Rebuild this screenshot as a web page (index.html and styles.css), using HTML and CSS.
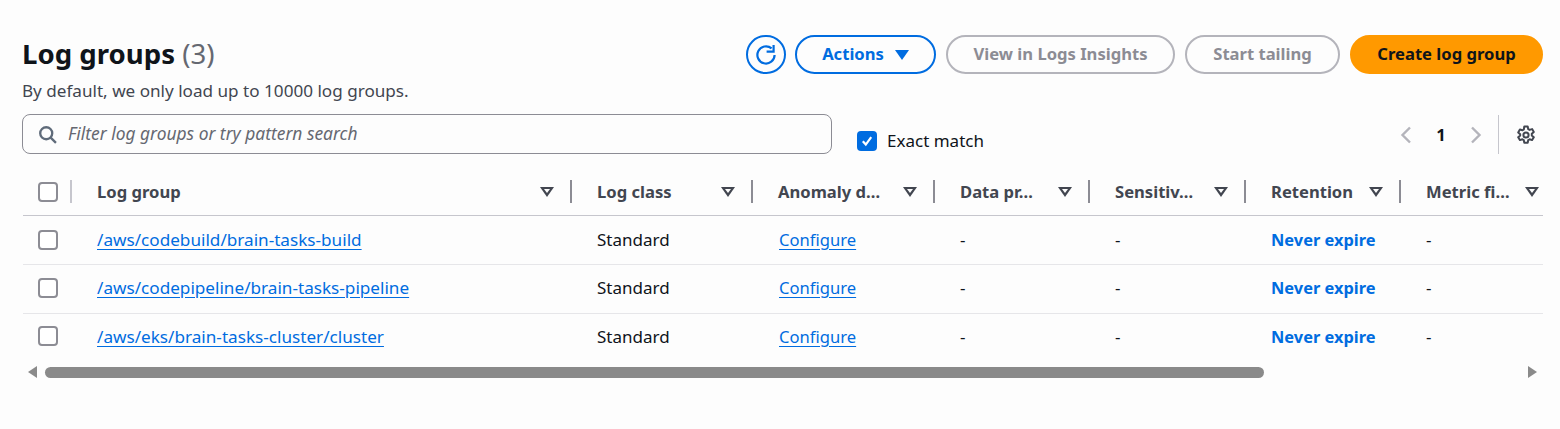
FILE: index.html
```html
<!DOCTYPE html>
<html lang="en">
<head>
  <meta charset="UTF-8">
  <meta name="viewport" content="width=device-width, initial-scale=1">
  <title>Log groups</title>
  <link rel="stylesheet" href="styles.css">
</head>
<body>

  <div class="container">

    <div class="header">
      <div class="heading">
        <h1>Log groups <span class="count">(3)</span></h1>
        <p>By default, we only load up to 10000 log groups.</p>
      </div>
      <div class="actions">
        <button class="btn-icon" type="button" aria-label="Refresh">
          <svg width="24" height="24" viewBox="0 0 24 24" fill="none" stroke="currentColor" stroke-width="2.2"><path d="M20.6 12a8.6 8.6 0 1 1-3-6.6"/><path d="M12.6 8.6h7V2"/></svg>
        </button>
        <button class="btn btn-normal" type="button">Actions <span class="caret"></span></button>
        <button class="btn btn-disabled btn-insights" type="button">View in Logs Insights</button>
        <button class="btn btn-disabled btn-tail" type="button">Start tailing</button>
        <button class="btn btn-primary" type="button">Create log group</button>
      </div>
    </div>

    <div class="filters">
      <div class="search">
        <svg width="19" height="19" viewBox="0 0 18 18" fill="none" stroke="#5f6b7a" stroke-width="2.2"><circle cx="7.8" cy="7.8" r="5.7"/><path d="M12 12l5 5"/></svg>
        <span>Filter log groups or try pattern search</span>
      </div>
      <label class="exact">
        <span class="check-on">
          <svg width="14" height="14" viewBox="0 0 14 14" fill="none" stroke="#fff" stroke-width="2.2"><path d="M2.8 7.2l3 3.4 5.4-7.4"/></svg>
        </span>
        <span class="exact-text">Exact match</span>
      </label>
      <div class="pager">
        <svg class="chev" width="14" height="20" viewBox="0 0 14 20" fill="none" stroke="#b4b4bb" stroke-width="2.4"><path d="M11 2.5L3.5 10l7.5 7.5"/></svg>
        <span class="page">1</span>
        <svg class="chev" width="14" height="20" viewBox="0 0 14 20" fill="none" stroke="#b4b4bb" stroke-width="2.4"><path d="M3 2.5l7.5 7.5L3 17.500"/></svg>
        <span class="pager-sep"></span>
        <svg class="gear" width="20" height="20" viewBox="0 0 20 20" fill="none" stroke="#424650" stroke-width="2"><circle cx="10" cy="10" r="2.6"/><path d="M8.3 1.500h3.400l.5 2.600 1.400.8 2.500-.8 1.700 2.900-2 1.800v1.600l2 1.800-1.700 2.900-2.500-.8-1.400.8-.5 2.600H8.300l-.5-2.600-1.400-.8-2.500.8-1.700-2.900 2-1.800V9.200l-2-1.800 1.700-2.900 2.500.8 1.400-.8z" stroke-linejoin="round"/></svg>
      </div>
    </div>

    <table class="groups">
      <colgroup>
        <col class="c-check"><col class="c-group"><col class="c-class"><col class="c-anomaly">
        <col class="c-data"><col class="c-sens"><col class="c-ret"><col class="c-metric">
      </colgroup>
      <thead>
        <tr>
          <th class="cell-check"><span class="box"></span><i class="sep sep-light"></i></th>
          <th><div class="th"><span class="th-text">Log group</span><span class="sort"></span></div><i class="sep"></i></th>
          <th><div class="th"><span class="th-text">Log class</span><span class="sort"></span></div><i class="sep"></i></th>
          <th><div class="th"><span class="th-text">Anomaly d…</span><span class="sort"></span></div><i class="sep"></i></th>
          <th><div class="th"><span class="th-text">Data pr…</span><span class="sort"></span></div><i class="sep"></i></th>
          <th><div class="th"><span class="th-text">Sensitiv…</span><span class="sort"></span></div><i class="sep"></i></th>
          <th><div class="th"><span class="th-text">Retention</span><span class="sort"></span></div><i class="sep"></i></th>
          <th><div class="th th-last"><span class="th-text">Metric fi…</span><span class="sort"></span></div></th>
        </tr>
      </thead>
      <tbody>
        <tr>
          <td class="cell-check"><span class="box"></span></td>
          <td><a class="path" href="#">/aws/codebuild/brain-tasks-build</a></td>
          <td>Standard</td>
          <td><a class="conf" href="#">Configure</a></td>
          <td>-</td>
          <td>-</td>
          <td class="strong">Never expire</td>
          <td>-</td>
        </tr>
        <tr>
          <td class="cell-check"><span class="box"></span></td>
          <td><a class="path" href="#">/aws/codepipeline/brain-tasks-pipeline</a></td>
          <td>Standard</td>
          <td><a class="conf" href="#">Configure</a></td>
          <td>-</td>
          <td>-</td>
          <td class="strong">Never expire</td>
          <td>-</td>
        </tr>
        <tr>
          <td class="cell-check"><span class="box"></span></td>
          <td><a class="path" href="#">/aws/eks/brain-tasks-cluster/cluster</a></td>
          <td>Standard</td>
          <td><a class="conf" href="#">Configure</a></td>
          <td>-</td>
          <td>-</td>
          <td class="strong">Never expire</td>
          <td>-</td>
        </tr>
      </tbody>
    </table>

    <div class="scrollbar">
      <span class="arrow-left"></span>
      <div class="track"><div class="thumb"></div></div>
      <span class="arrow-right"></span>
    </div>

  </div>

</body>
</html>
```

FILE: styles.css
```css
* {
  box-sizing: border-box;
}
body {
  background-color: #fdfdfd;
  font-family: 'Noto Sans', sans-serif;
  font-size: 17px;
  color: #0f141a;
  margin: 0;
  padding: 0;
}
.container {
  padding: 35px 17px 0 22px;
}
.header {
  display: flex;
  justify-content: space-between;
  align-items: flex-start;
  height: 79px;
}
h1 {
  font-size: 27.6px;
  line-height: 32px;
  font-weight: 700;
  margin: 2px 0 0;
}
.count {
  font-weight: 400;
  color: #656871;
}
.heading p {
  margin: 12px 0 0;
  font-size: 17.13px;
  line-height: 20px;
  color: #424650;
}
.actions {
  display: flex;
  align-items: center;
  gap: 10px;
}
.btn,
.btn-icon {
  height: 39px;
  border-radius: 20px;
  border: 2px solid #006ce0;
  background: transparent;
  font-family: inherit;
  font-size: 16.6px;
  font-weight: 700;
  line-height: 33px;
  color: #006ce0;
  padding: 0 0 2px;
  display: flex;
  align-items: center;
  justify-content: center;
}
.btn-icon {
  width: 40px;
  padding: 0;
  margin-right: -1px;
  margin-left: -1px;
}
.btn-normal {
  width: 141px;
  gap: 11px;
}
.caret {
  width: 0;
  height: 0;
  margin-top: 2px;
  border-left: 7px solid transparent;
  border-right: 7px solid transparent;
  border-top: 10px solid #006ce0;
}
.btn-disabled {
  border-color: #b4b4bb;
  color: #8c8c94;
}
.btn-insights {
  width: 229px;
}
.btn-tail {
  width: 155px;
}
.btn-primary {
  width: 193px;
  background: #ff9900;
  border-color: #ff9900;
  color: #0f141a;
}
.filters {
  display: flex;
  align-items: flex-start;
  height: 55px;
}
.search {
  width: 810px;
  height: 40px;
  border: 1px solid #8c8c94;
  border-radius: 8px;
  display: flex;
  align-items: center;
  gap: 11px;
  padding-left: 15px;
  font-size: 17.4px;
  font-style: italic;
  color: #656871;
}
.search span {
  margin-top: -2px;
}
.exact {
  display: flex;
  align-items: center;
  gap: 10px;
  margin: 17px 0 0 25px;
  height: 20px;
  color: #0f141a;
}
.exact-text {
  margin-top: -2px;
}
.check-on {
  width: 20px;
  height: 20px;
  border-radius: 4px;
  background: #006ce0;
  display: flex;
  align-items: center;
  justify-content: center;
}
.pager {
  margin-left: auto;
  display: flex;
  align-items: center;
  height: 39px;
  margin-top: 1px;
  padding-right: 7px;
}
.page {
  font-weight: 700;
  font-size: 16.6px;
  width: 56px;
  text-align: center;
  color: #0f141a;
}
.pager-sep {
  width: 1px;
  height: 39px;
  background: #c6c6cd;
  margin: 0 17px 0 15px;
}
.groups {
  table-layout: fixed;
  border-collapse: collapse;
  width: 1520px;
  margin-left: 1px;
}
.c-check { width: 49px; }
.c-group { width: 500px; }
.c-class { width: 181px; }
.c-anomaly { width: 182px; }
.c-data { width: 155px; }
.c-sens { width: 156px; }
.c-ret { width: 155px; }
.c-metric { width: 142px; }
th {
  position: relative;
  height: 46px;
  padding: 0;
  text-align: left;
  border-bottom: 1px solid #c6c6cd;
  color: #424650;
  font-size: 16.6px;
  font-weight: 700;
  line-height: 20px;
}
.th {
  display: flex;
  justify-content: space-between;
  align-items: center;
  padding: 0 18px 0 25px;
}
.th-last {
  padding-right: 4px;
}
.th-text {
  white-space: nowrap;
}
.sort {
  flex: none;
  width: 0;
  height: 0;
  position: relative;
  border-left: 7px solid transparent;
  border-right: 7px solid transparent;
  border-top: 10px solid #424650;
}
.sort::after {
  content: "";
  position: absolute;
  left: -3px;
  top: -8px;
  border-left: 3px solid transparent;
  border-right: 3px solid transparent;
  border-top: 4px solid #fdfdfd;
}
.sep {
  position: absolute;
  right: 0;
  top: 11px;
  width: 2px;
  height: 23px;
  background: #8c8c94;
}
.sep-light {
  background: #c6c6cd;
}
td {
  height: 49px;
  padding: 0 0 2px 25px;
  border-bottom: 1px solid #e6e6e9;
  line-height: 20px;
  white-space: nowrap;
}
tbody tr:first-child td {
  padding-bottom: 0;
}
tbody tr:last-child td {
  border-bottom: none;
}
.cell-check {
  padding: 0 0 0 15px;
}
tbody tr:nth-child(2) .cell-check {
  padding-bottom: 2px;
}
tbody tr:nth-child(3) .cell-check {
  padding-bottom: 4px;
}
.box {
  display: block;
  width: 20px;
  height: 20px;
  border: 2px solid #8c8c94;
  border-radius: 4px;
  background: #fff;
}
a {
  color: #006ce0;
  text-decoration: underline;
  text-underline-offset: 3px;
}
.path {
  font-size: 17.15px;
}
.conf {
  font-size: 16.6px;
  margin-left: 1px;
}
.strong {
  font-size: 16.4px;
  font-weight: 700;
  color: #006ce0;
}
.scrollbar {
  display: flex;
  align-items: center;
  height: 12px;
  width: 1515px;
  margin-top: 4px;
  padding-left: 6px;
}
.arrow-left,
.arrow-right {
  flex: none;
  width: 0;
  height: 0;
  border-top: 6px solid transparent;
  border-bottom: 6px solid transparent;
}
.arrow-left {
  border-right: 9px solid #8a8a8a;
}
.arrow-right {
  border-left: 9px solid #8a8a8a;
}
.track {
  flex: 1;
  padding-left: 8px;
}
.thumb {
  width: 1219px;
  height: 11px;
  border-radius: 6px;
  background: #8a8a8a;
}
```
